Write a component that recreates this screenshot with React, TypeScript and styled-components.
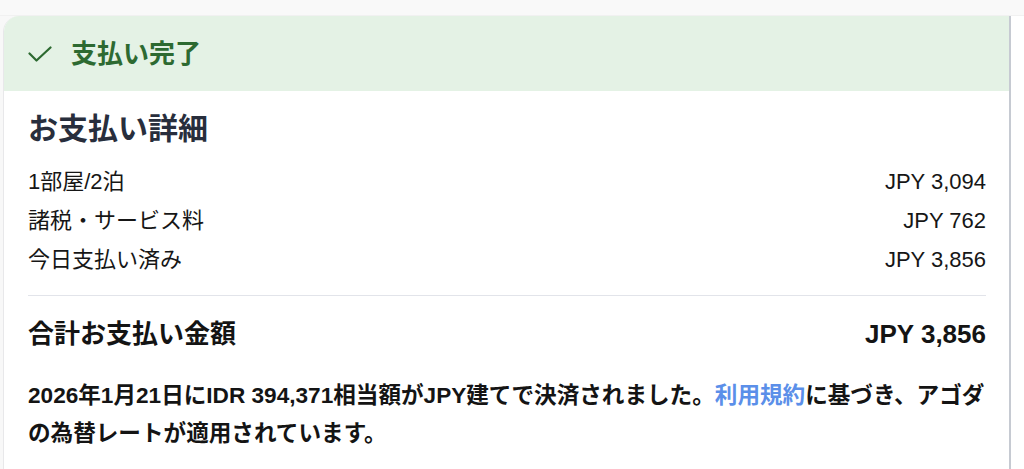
import React from 'react';
import styled, { createGlobalStyle } from 'styled-components';

const GlobalStyle = createGlobalStyle`
  html, body {
    margin: 0;
    padding: 0;
    background: #ffffff;
  }
  body {
    font-family: "Liberation Sans", "Noto Sans CJK JP", sans-serif;
    color: #1a1a1a;
  }
`;

const Page = styled.div`
  display: flex;
  flex-direction: column;
  height: 469px;
  overflow: hidden;
`;

const TopStrip = styled.div`
  height: 16px;
  flex-shrink: 0;
  background: #f9f9f9;
  box-shadow: inset 0 -1px 0 #f1f1f1;
`;

const Row = styled.div`
  display: flex;
  flex: 1;
  background: #f8f8f8;
`;

const Gutter = styled.div`
  width: 3px;
  flex-shrink: 0;
`;

const RightSpace = styled.div`
  width: 13px;
  flex-shrink: 0;
  background: #ffffff;
`;

const Card = styled.section`
  flex: 1;
  background: #ffffff;
  border-left: 1px solid #e8e8ea;
  border-right: 2px solid #c6cad2;
  border-top-left-radius: 16px;
  overflow: hidden;
`;

const StatusBar = styled.div`
  display: flex;
  align-items: center;
  gap: 19px;
  height: 75px;
  padding: 0 24px;
  background: #e4f2e5;
  color: #2d6a31;
`;

const StatusTitle = styled.h2`
  margin: 0;
  font-size: 26px;
  line-height: 32px;
  font-weight: 700;
`;

const Body = styled.div`
  padding: 20px 23px 0 24px;
`;

const Heading = styled.h3`
  margin: 0 0 15px;
  font-size: 30px;
  line-height: 36px;
  font-weight: 700;
  color: #282e3c;
`;

const LineItem = styled.div`
  display: flex;
  justify-content: space-between;
  font-size: 22px;
  line-height: 39px;
  color: #161616;
`;

const Divider = styled.hr`
  margin: 16px 0 20px;
  border: none;
  border-top: 1px solid #e2e4ea;
`;

const TotalRow = styled.div`
  display: flex;
  justify-content: space-between;
  font-size: 26px;
  line-height: 36px;
  font-weight: 700;
  color: #141414;
`;

const Note = styled.p`
  margin: 25px 0 0;
  font-size: 22.6px;
  line-height: 38px;
  font-weight: 700;
  color: #141414;
`;

const TermsLink = styled.a`
  color: #5b8fe9;
  text-decoration: none;
`;

const CheckIcon = () => (
  <svg width="24" height="16" viewBox="0 0 24 16" fill="none">
    <path
      d="M1.5 7.5 L8.5 14.5 L22.5 1.5"
      stroke="currentColor"
      strokeWidth="2.2"
      strokeLinecap="round"
      strokeLinejoin="round"
    />
  </svg>
);

const items = [
  { label: '1部屋/2泊', amount: 'JPY 3,094' },
  { label: '諸税・サービス料', amount: 'JPY 762' },
  { label: '今日支払い済み', amount: 'JPY 3,856' },
];

export default function App() {
  return (
    <>
      <GlobalStyle />
      <Page>
        <TopStrip />
        <Row>
          <Gutter />
          <Card>
            <StatusBar>
              <CheckIcon />
              <StatusTitle>支払い完了</StatusTitle>
            </StatusBar>
            <Body>
              <Heading>お支払い詳細</Heading>
              {items.map((item) => (
                <LineItem key={item.label}>
                  <span>{item.label}</span>
                  <span>{item.amount}</span>
                </LineItem>
              ))}
              <Divider />
              <TotalRow>
                <span>合計お支払い金額</span>
                <span>JPY 3,856</span>
              </TotalRow>
              <Note>
                2026年1月21日にIDR 394,371相当額がJPY建てで決済されました。<TermsLink href="#">利用規約</TermsLink>に基づき、アゴダの為替レートが適用されています。
              </Note>
            </Body>
          </Card>
          <RightSpace />
        </Row>
      </Page>
    </>
  );
}
